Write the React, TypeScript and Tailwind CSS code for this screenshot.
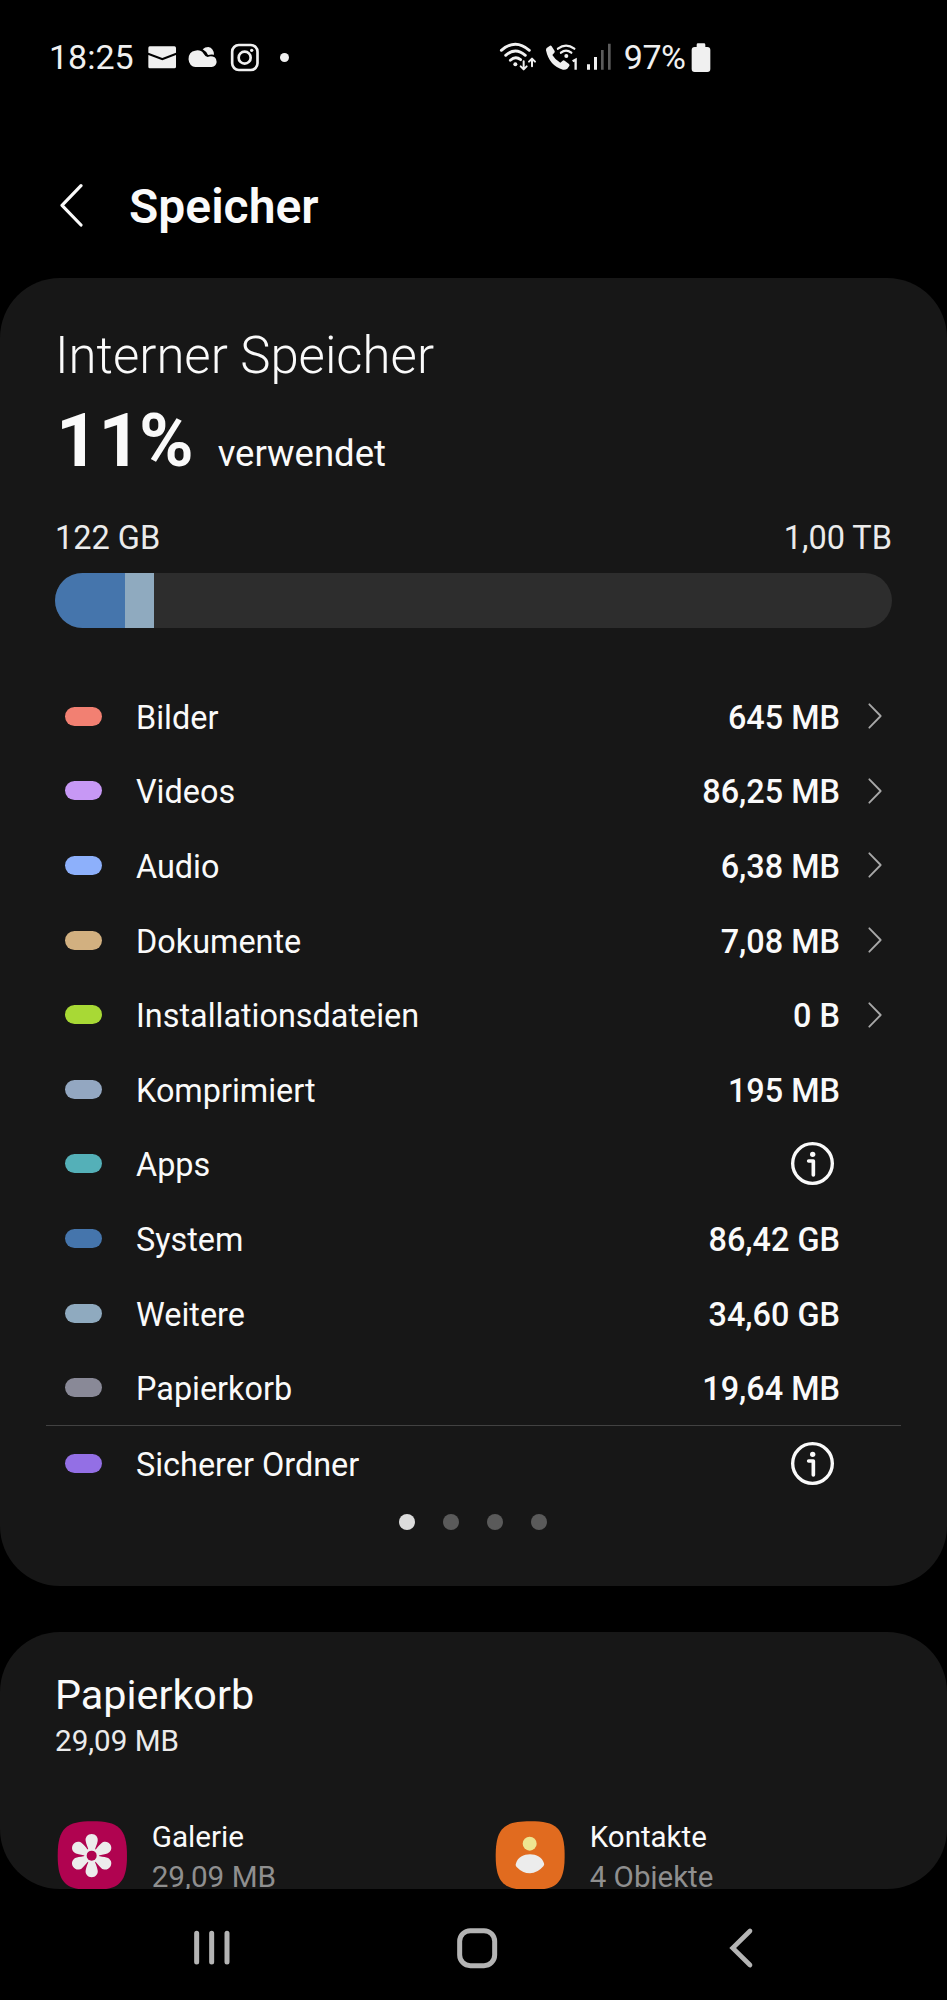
import React from "react";

type Category = {
  label: string;
  color: string;
  value?: string;
  link?: boolean;
};

const categories: Category[] = [
  { label: "Bilder", color: "bg-[#f28072]", value: "645 MB", link: true },
  { label: "Videos", color: "bg-[#c798f5]", value: "86,25 MB", link: true },
  { label: "Audio", color: "bg-[#8db0fb]", value: "6,38 MB", link: true },
  { label: "Dokumente", color: "bg-[#d2b080]", value: "7,08 MB", link: true },
  { label: "Installationsdateien", color: "bg-[#a8d935]", value: "0 B", link: true },
  { label: "Komprimiert", color: "bg-[#93a7c1]", value: "195 MB" },
  { label: "Apps", color: "bg-[#54b0b8]" },
  { label: "System", color: "bg-[#4575ac]", value: "86,42 GB" },
  { label: "Weitere", color: "bg-[#8faabf]", value: "34,60 GB" },
  { label: "Papierkorb", color: "bg-[#898997]", value: "19,64 MB" },
];

function InfoIcon() {
  return (
    <svg viewBox="0 0 129 129" className="mr-[6.5px] h-[43px] w-[43px]" fill="none" stroke="#fafafa">
      <circle cx="64.500" cy="64.500" r="59.500" strokeWidth="10" />
      <circle cx="65" cy="37" r="8" fill="#fafafa" stroke="none" />
      <path d="M53 57H67V99" strokeWidth="11" strokeLinecap="round" strokeLinejoin="round" />
    </svg>
  );
}

function Row({ item, height }: { item: Category; height: string }) {
  return (
    <div className={"flex items-center pl-[65px] pr-[65px] " + height}>
      <span className={"h-[19px] w-[37px] rounded-full " + item.color} />
      <span className="ml-[34px] pt-[3px] text-[32.4px] leading-[40px] text-[#fafafa]">{item.label}</span>
      <span className="ml-auto flex items-center">
        {item.value ? (
          <span className="pt-[3px] text-[32.4px] font-medium leading-[40px] text-[#fafafa]">{item.value}</span>
        ) : (
          <InfoIcon />
        )}
        <span className="ml-[28px] flex w-[14px]">
          {item.link && (
            <svg viewBox="0 0 42 78" className="h-[26px] w-[14px]" fill="none" stroke="#a8a8a8" strokeWidth="5.5" strokeLinecap="round" strokeLinejoin="round">
              <path d="M4 4L38 39L4 74" />
            </svg>
          )}
        </span>
      </span>
    </div>
  );
}

function StatusBar() {
  return (
    <div className="flex h-[114px] shrink-0 items-center text-[34px] leading-[40px] text-[#f0f0f0]">
      <span className="w-[98px] shrink-0 pl-[49px]">18:25</span>
      <svg viewBox="350 66 92 90" className="ml-[48.7px] h-[30px] w-[30.7px] shrink-0" fill="#f0f0f0">
        <path d="M358 79H432Q437 79 437 84V98L396 114L354 98V84Q354 79 358 79Z" />
        <path d="M354 105L396 121L437 105V140Q437 145 432 145H358Q354 145 354 140Z" />
      </svg>
      <svg viewBox="474 66 90 90" className="ml-[10.700px] h-[30px] w-[30px] shrink-0" fill="#f0f0f0">
        <path d="M497 141A20 24 0 0 1 495 92Q512 88 521 101Q526 110 533 111Q543 106 554 112Q561 118 560 126Q558 139 545 141Z" />
        <path d="M518 88Q525 81 535 81Q551 84 552 104Q543 102 534 105Q530 95 518 88Z" />
      </svg>
      <svg viewBox="599 66 90 90" className="ml-[11.700px] h-[30px] w-[30px] shrink-0" fill="none" stroke="#f0f0f0" strokeWidth="8">
        <rect x="605.500" y="75" width="76" height="75" rx="20" />
        <circle cx="643" cy="113" r="18" />
        <circle cx="664" cy="91" r="5" fill="#f0f0f0" stroke="none" />
      </svg>
      <span className="ml-[20.500px] h-[9px] w-[9px] shrink-0 rounded-full bg-[#f0f0f0]" />
      <svg viewBox="57 66 114 90" className="ml-[210px] h-[30px] w-[38px] shrink-0" fill="none" stroke="#f0f0f0" strokeWidth="8.500" strokeLinecap="round">
        <path d="M64 91Q106 54 148 91" />
        <path d="M77 106Q106 80 136 106" />
        <path d="M91 121Q106 107 122 119" />
        <circle cx="106" cy="133" r="6" fill="#f0f0f0" stroke="none" />
        <path d="M131 124V146M122 139L131 148L140 139M156 139V118M147 125L156 116L165 125" strokeWidth="6" strokeLinejoin="round" />
      </svg>
      <svg viewBox="196 66 100 90" className="ml-[8px] h-[30px] w-[33.300px] shrink-0" fill="none" stroke="#f0f0f0" strokeLinecap="round">
        <path d="M201 84L211 77Q214 76 216 79L225 93Q226 96 224 98L218 105Q227 120 242 128L249 122Q252 120 255 122L268 132Q271 135 269 138L263 146Q258 150 250 149Q209 138 199 91Q199 86 201 84Z" fill="#f0f0f0" stroke="none" />
        <path d="M235 86Q259 68 284 86" strokeWidth="7" />
        <path d="M244 98Q259 86 275 98" strokeWidth="7" />
        <circle cx="260" cy="108" r="6" fill="#f0f0f0" stroke="none" />
        <path d="M279 124L288 119V149" strokeWidth="7" strokeLinecap="butt" />
      </svg>
      <svg viewBox="318 66 78 90" className="ml-[7.300px] h-[30px] w-[26px] shrink-0">
        <path d="M321 133h9v16h-9zM342 111h9v38h-9z" fill="#f0f0f0" />
        <path d="M363 90h8v59h-8zM384 71h8v78h-8z" fill="#5c5c5c" />
      </svg>
      <span className="ml-[12px] w-[64px] shrink-0 tracking-[-0.5px]">97%</span>
      <svg viewBox="636 66 60 90" className="ml-[3px] h-[30px] w-[20px] shrink-0" fill="#f0f0f0">
        <path d="M653 81V74Q653 70 657 70H675Q679 70 679 74V81H685Q694 81 694 90V147Q694 156 685 156H647Q638 156 638 147V90Q638 81 647 81Z" />
      </svg>
    </div>
  );
}

export default function App() {
  return (
    <div className="flex h-[2000px] w-[947px] flex-col overflow-hidden bg-black font-['Roboto',sans-serif] text-[#fafafa]">
      <StatusBar />

      <header className="flex h-[164px] shrink-0 items-center pl-[59px] pt-[20px]">
        <svg viewBox="178 38 75 134" className="mb-[2px] h-[44.700px] w-[25px]" fill="none" stroke="#fafafa" strokeWidth="9.500" strokeLinecap="round" strokeLinejoin="round">
          <path d="M244 46L187 105L244 164" />
        </svg>
        <h1 className="ml-[45px] pt-[1px] text-[48px] font-semibold leading-[60px]">Speicher</h1>
      </header>

      <section className="flex h-[1308px] shrink-0 flex-col rounded-[60px] bg-[#171717] pt-[48px]">
        <h2 className="pl-[55px] text-[50.900px] font-light leading-[60px]">Interner Speicher</h2>
        <div className="mt-[15px] flex h-[80px] items-baseline pl-[56px]">
          <span className="text-[74px] font-bold leading-[80px]">
            11<span className="-ml-[2px]">%</span>
          </span>
          <span className="ml-[24px] text-[36.5px]">verwendet</span>
        </div>
        <div className="mt-[37px] flex justify-between pl-[55px] pr-[55px] text-[32.5px] leading-[40px] text-[#ebebeb]">
          <span>122 GB</span>
          <span>1,00 TB</span>
        </div>
        <div className="mx-[55px] mt-[15px] flex h-[55px] overflow-hidden rounded-full bg-[#2d2d2d]">
          <div className="w-[70px] bg-[#4575ac]" />
          <div className="w-[28.500px] bg-[#8faabf]" />
        </div>
        <div className="mt-[51px]">
          {categories.map((c) => (
            <Row key={c.label} item={c} height="h-[74.6px]" />
          ))}
          <div className="mx-[46px] h-px bg-[#424242]" />
          <Row item={{ label: "Sicherer Ordner", color: "bg-[#936fe5]" }} height="h-[75px]" />
        </div>
        <div className="mt-[13px] flex justify-center gap-[28px] pr-[2px]">
          <span className="h-[16px] w-[16px] rounded-full bg-[#dcdcdc]" />
          <span className="h-[16px] w-[16px] rounded-full bg-[#5a5a5a]" />
          <span className="h-[16px] w-[16px] rounded-full bg-[#5a5a5a]" />
          <span className="h-[16px] w-[16px] rounded-full bg-[#5a5a5a]" />
        </div>
      </section>

      <section className="mt-[46px] h-[257px] shrink-0 overflow-hidden rounded-[60px] bg-[#171717] pt-[38px]">
        <h2 className="pl-[55px] text-[41.300px] leading-[50px]">Papierkorb</h2>
        <p className="mt-[3px] pl-[55px] text-[29.600px] leading-[36px] text-[#ebebeb]">29,09 MB</p>
        <div className="mt-[58px] grid grid-cols-[438px_1fr] pl-[57px]">
          <div className="flex">
            <svg viewBox="171 122 212 208" className="mt-[4px] h-[69.300px] w-[70.700px] shrink-0">
              <path d="M277 123C354 123 381 142 381 226S354 329 277 329S173 310 173 226S200 123 277 123Z" fill="#b00350" />
              <g fill="#ececec">
                {[0, 60, 120, 180, 240, 300].map((a) => (
                  <path key={a} transform={`rotate(${a} 275 226)`} d="M275 161C287 161 295 171 293 182C291 195 286 200 284 212H266C264 200 259 195 257 182C255 171 263 161 275 161Z" />
                ))}
                <circle cx="275" cy="226" r="22" />
              </g>
              <circle cx="275" cy="226" r="15" fill="#b00350" />
            </svg>
            <div className="ml-[24px] text-[29.700px] leading-[40px]">
              <div>Galerie</div>
              <div className="text-[#8f8f8f]">29,09 MB</div>
            </div>
          </div>
          <div className="flex">
            <svg viewBox="166 122 212 208" className="mt-[4px] h-[69.300px] w-[70.700px] shrink-0">
              <path d="M272 123C349 123 375 142 375 226S349 329 272 329S168 310 168 226S195 123 272 123Z" fill="#e16b1f" />
              <circle cx="270" cy="190" r="21" fill="#eee590" />
              <path d="M229 249C239 213 303 213 313 249Q315 254 311 258Q293 279 271 279Q249 279 230 259Q226 255 229 249Z" fill="#ececec" />
            </svg>
            <div className="ml-[24px] text-[29.500px] leading-[40px]">
              <div>Kontakte</div>
              <div className="text-[#8f8f8f]">4 Objekte</div>
            </div>
          </div>
        </div>
      </section>

      <nav className="flex h-[111px] shrink-0 items-center pl-[192px] pt-[7px]">
        <svg viewBox="0 0 120 126" className="h-[42px] w-[40px]" fill="none" stroke="#b4b4b4" strokeWidth="15" strokeLinecap="round">
          <path d="M14 19V105M59 19V105M105 19V105" />
        </svg>
        <svg viewBox="0 0 126 126" className="ml-[224px] h-[42px] w-[42px]" fill="none" stroke="#b4b4b4" strokeWidth="15">
          <rect x="11" y="11" width="105" height="105" rx="32" />
        </svg>
        <svg viewBox="0 0 78 126" className="ml-[230px] h-[42px] w-[26px]" fill="none" stroke="#b4b4b4" strokeWidth="14" strokeLinecap="round">
          <path d="M66 12L14 63L66 114" />
        </svg>
      </nav>
    </div>
  );
}
